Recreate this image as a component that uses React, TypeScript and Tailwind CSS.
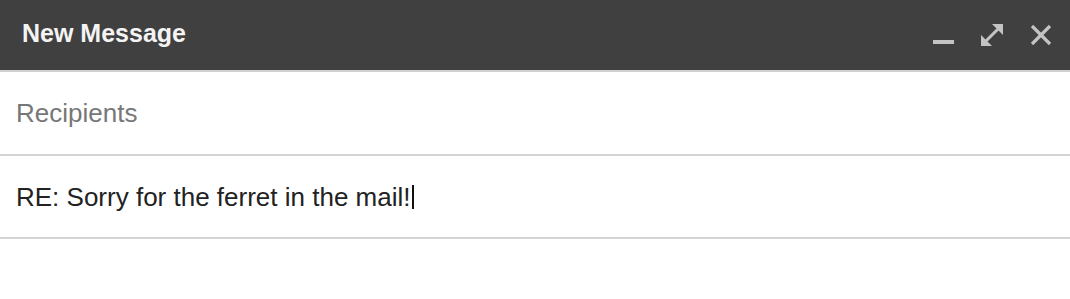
import React from "react";

export default function App() {
  return (
    <div className="w-[1070px] h-[299px] bg-white overflow-hidden" style={{ fontFamily: '"Liberation Sans", Arial, Helvetica, sans-serif' }}>
      <div className="h-[70px] bg-[#404040] flex items-center justify-between pl-[22px] pr-[18px]">
        <div className="text-[25px] font-bold text-[#f4f4f4] leading-none pb-[3px]">New Message</div>
        <div className="flex items-center gap-[26px]">
          <svg width="22" height="22" viewBox="0 0 22 22" className="block">
            <rect x="0" y="16" width="21" height="4" fill="#c4c4c4" />
          </svg>
          <svg width="22" height="22" viewBox="0 0 22 22" className="block">
            <line x1="4" y1="18" x2="18" y2="4" stroke="#c4c4c4" strokeWidth="3" />
            <polygon points="22,0 22,11 11,0" fill="#c4c4c4" />
            <polygon points="0,22 0,11 11,22" fill="#c4c4c4" />
          </svg>
          <svg width="22" height="22" viewBox="0 0 22 22" className="block ml-px">
            <line x1="2" y1="2" x2="20" y2="20" stroke="#c4c4c4" strokeWidth="3.2" />
            <line x1="20" y1="2" x2="2" y2="20" stroke="#c4c4c4" strokeWidth="3.2" />
          </svg>
        </div>
      </div>
      <div className="h-[2px] bg-[#d0d0d0]" />
      <div className="h-[84px] flex items-center pl-4 border-b-2 border-[#d4d4d4]">
        <span className="text-[26px] text-[#777777] leading-none">Recipients</span>
      </div>
      <div className="h-[83px] flex items-center pl-4 border-b-2 border-[#d4d4d4]">
        <span className="text-[26px] text-[#222222] leading-none flex items-center">
          RE: Sorry for the ferret in the mail!
          <span className="inline-block w-[2px] h-[24px] bg-[#111111] ml-[2px]" />
        </span>
      </div>
    </div>
  );
}
